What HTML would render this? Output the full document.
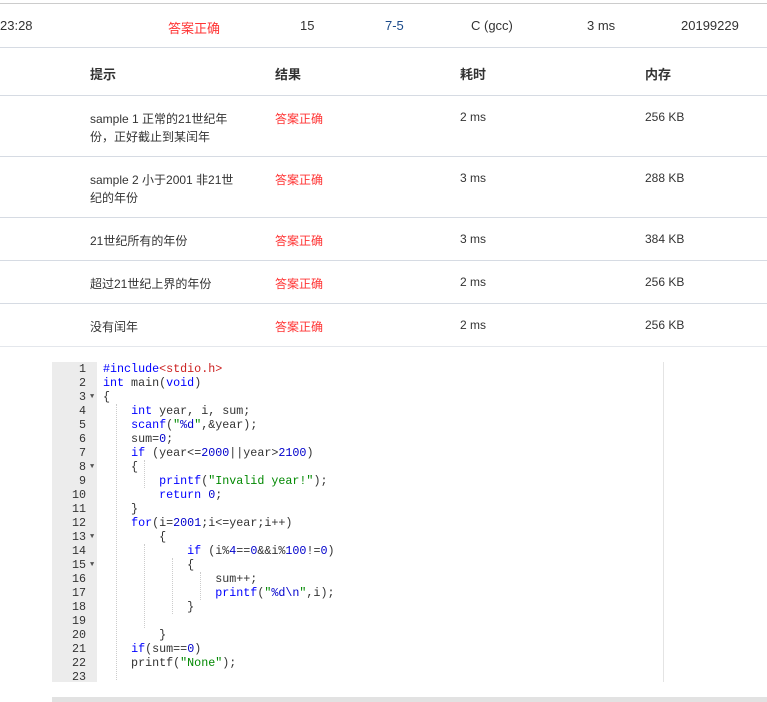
<!DOCTYPE html>
<html><head><meta charset="utf-8"><style>
body{margin:0;width:767px;height:702px;background:#fff;font-family:"Liberation Sans","Noto Sans CJK SC",sans-serif;font-size:13px;color:#333;position:relative;overflow:hidden}
.a{position:absolute;white-space:nowrap}
.hl{position:absolute;left:0;width:767px;height:1px;background:#d6dbe3}
.r{color:#f33}
.code{position:absolute;left:52px;top:362px;width:612px;height:320px;font-family:"Liberation Mono",monospace;font-size:11.7px;line-height:14px}
.gut{position:absolute;left:0;top:0;width:45px;height:320px;background:#ececec}
.ln{position:absolute;left:0;width:34px;text-align:right;color:#333}
.ar{position:absolute;left:38px;font-size:7px;color:#555}
.cl{position:absolute;left:51px;white-space:pre;color:#333}
.k{color:#00f}.s{color:#080}.n{color:#00c}.p{color:#c22}
</style></head><body>
<div class="hl" style="top:3px;background:#ccc"></div>
<div class="a" style="left:0;top:18px">23:28</div>
<div class="a r" style="left:168px;top:18px">答案正确</div>
<div class="a" style="left:300px;top:18px">15</div>
<div class="a" style="left:385px;top:18px;color:#1a4a8a">7-5</div>
<div class="a" style="left:471px;top:18px">C (gcc)</div>
<div class="a" style="left:587px;top:18px">3 ms</div>
<div class="a" style="left:681px;top:18px">20199229</div>
<div class="hl" style="top:47px"></div>
<div class="a" style="left:90px;top:64px;font-weight:bold">提示</div>
<div class="a" style="left:275px;top:64px;font-weight:bold">结果</div>
<div class="a" style="left:460px;top:64px;font-weight:bold">耗时</div>
<div class="a" style="left:645px;top:64px;font-weight:bold">内存</div>
<div class="hl" style="top:95px"></div>
<div class="a" style="left:90px;top:110px;font-size:12px;line-height:18px">sample 1 正常的21世纪年<br>份，正好截止到某闰年</div>
<div class="a r" style="left:275px;top:110px;font-size:12px">答案正确</div>
<div class="a" style="left:460px;top:110px;font-size:12px">2 ms</div>
<div class="a" style="left:645px;top:110px;font-size:12px">256 KB</div>
<div class="hl" style="top:156px"></div>
<div class="a" style="left:90px;top:171px;font-size:12px;line-height:18px">sample 2 小于2001 非21世<br>纪的年份</div>
<div class="a r" style="left:275px;top:171px;font-size:12px">答案正确</div>
<div class="a" style="left:460px;top:171px;font-size:12px">3 ms</div>
<div class="a" style="left:645px;top:171px;font-size:12px">288 KB</div>
<div class="hl" style="top:217px"></div>
<div class="a" style="left:90px;top:232px;font-size:12px">21世纪所有的年份</div>
<div class="a r" style="left:275px;top:232px;font-size:12px">答案正确</div>
<div class="a" style="left:460px;top:232px;font-size:12px">3 ms</div>
<div class="a" style="left:645px;top:232px;font-size:12px">384 KB</div>
<div class="hl" style="top:260px"></div>
<div class="a" style="left:90px;top:275px;font-size:12px">超过21世纪上界的年份</div>
<div class="a r" style="left:275px;top:275px;font-size:12px">答案正确</div>
<div class="a" style="left:460px;top:275px;font-size:12px">2 ms</div>
<div class="a" style="left:645px;top:275px;font-size:12px">256 KB</div>
<div class="hl" style="top:303px"></div>
<div class="a" style="left:90px;top:318px;font-size:12px">没有闰年</div>
<div class="a r" style="left:275px;top:318px;font-size:12px">答案正确</div>
<div class="a" style="left:460px;top:318px;font-size:12px">2 ms</div>
<div class="a" style="left:645px;top:318px;font-size:12px">256 KB</div>
<div class="hl" style="top:346px;background:#e4e7ec"></div>
<div class="code">
<div class="gut"></div>
<div style="position:absolute;left:611px;top:0;width:1px;height:320px;background:#e4e4e4"></div>
<div style="position:absolute;left:64px;top:42px;width:0;height:276px;border-left:1px dotted #ccc"></div>
<div style="position:absolute;left:92px;top:98px;width:0;height:28px;border-left:1px dotted #ccc"></div>
<div style="position:absolute;left:92px;top:182px;width:0;height:84px;border-left:1px dotted #ccc"></div>
<div style="position:absolute;left:120px;top:196px;width:0;height:56px;border-left:1px dotted #ccc"></div>
<div style="position:absolute;left:148px;top:210px;width:0;height:28px;border-left:1px dotted #ccc"></div>
<div class="ln" style="top:0">1</div><div class="ln" style="top:14px">2</div><div class="ln" style="top:28px">3</div>
<div class="ln" style="top:42px">4</div><div class="ln" style="top:56px">5</div><div class="ln" style="top:70px">6</div>
<div class="ln" style="top:84px">7</div><div class="ln" style="top:98px">8</div><div class="ln" style="top:112px">9</div>
<div class="ln" style="top:126px">10</div><div class="ln" style="top:140px">11</div><div class="ln" style="top:154px">12</div>
<div class="ln" style="top:168px">13</div><div class="ln" style="top:182px">14</div><div class="ln" style="top:196px">15</div>
<div class="ln" style="top:210px">16</div><div class="ln" style="top:224px">17</div><div class="ln" style="top:238px">18</div>
<div class="ln" style="top:252px">19</div><div class="ln" style="top:266px">20</div><div class="ln" style="top:280px">21</div>
<div class="ln" style="top:294px">22</div><div class="ln" style="top:308px">23</div>
<div class="ar" style="top:28px">▼</div><div class="ar" style="top:98px">▼</div><div class="ar" style="top:168px">▼</div><div class="ar" style="top:196px">▼</div>
<div class="cl" style="top:0"><span class="k">#include</span><span class="p">&lt;stdio.h&gt;</span></div>
<div class="cl" style="top:14px"><span class="k">int</span> main(<span class="k">void</span>)</div>
<div class="cl" style="top:28px">{</div>
<div class="cl" style="top:42px">    <span class="k">int</span> year, i, sum;</div>
<div class="cl" style="top:56px">    <span class="k">scanf</span>(<span class="s">"<span class="n">%d</span>"</span>,&amp;year);</div>
<div class="cl" style="top:70px">    sum=<span class="n">0</span>;</div>
<div class="cl" style="top:84px">    <span class="k">if</span> (year&lt;=<span class="n">2000</span>||year&gt;<span class="n">2100</span>)</div>
<div class="cl" style="top:98px">    {</div>
<div class="cl" style="top:112px">        <span class="k">printf</span>(<span class="s">"Invalid year!"</span>);</div>
<div class="cl" style="top:126px">        <span class="k">return</span> <span class="n">0</span>;</div>
<div class="cl" style="top:140px">    }</div>
<div class="cl" style="top:154px">    <span class="k">for</span>(i=<span class="n">2001</span>;i&lt;=year;i++)</div>
<div class="cl" style="top:168px">        {</div>
<div class="cl" style="top:182px">            <span class="k">if</span> (i%<span class="n">4</span>==<span class="n">0</span>&amp;&amp;i%<span class="n">100</span>!=<span class="n">0</span>)</div>
<div class="cl" style="top:196px">            {</div>
<div class="cl" style="top:210px">                sum++;</div>
<div class="cl" style="top:224px">                <span class="k">printf</span>(<span class="s">"<span class="n">%d\n</span>"</span>,i);</div>
<div class="cl" style="top:238px">            }</div>
<div class="cl" style="top:266px">        }</div>
<div class="cl" style="top:280px">    <span class="k">if</span>(sum==<span class="n">0</span>)</div>
<div class="cl" style="top:294px">    printf(<span class="s">"None"</span>);</div>
</div>
<div style="position:absolute;left:52px;top:697px;width:715px;height:5px;background:#e2e2e2"></div>
</body></html>
